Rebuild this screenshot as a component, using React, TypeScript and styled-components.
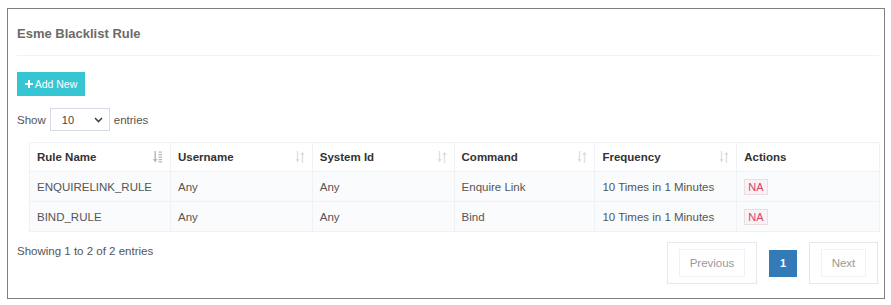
import React from "react"
import styled, { createGlobalStyle } from "styled-components"

const GlobalStyle = createGlobalStyle`
  html, body {
    margin: 0;
    padding: 0;
    background: #ffffff;
    font-family: "Liberation Sans", Arial, sans-serif;
  }
`

const Panel = styled.div`
  box-sizing: border-box;
  margin: 8px 0 0 7px;
  width: 878px;
  height: 291px;
  border: 1px solid #808080;
  padding: 0 5px 0 9px;
  display: flex;
  flex-direction: column;
`

const PanelHead = styled.div`
  height: 46px;
  display: flex;
  align-items: center;
  border-bottom: 1px solid #eef1f5;
`

const Title = styled.span`
  font-size: 13px;
  font-weight: bold;
  color: #6b6b6b;
  padding-top: 3px;
`

const AddButton = styled.button`
  margin-top: 16px;
  width: 68px;
  height: 24px;
  border: 0;
  padding: 0;
  background: #36c6d3;
  color: #ffffff;
  font-family: inherit;
  font-size: 10.5px;
  display: flex;
  align-items: center;
  justify-content: center;
  gap: 2px;
  cursor: pointer;
`

const LengthRow = styled.div`
  margin-top: 12px;
  display: flex;
  align-items: center;
  gap: 4px;
  font-size: 11.5px;
  color: #555;
`

const SelectBox = styled.div`
  box-sizing: border-box;
  width: 60px;
  height: 23px;
  border: 1px solid #d4dbe5;
  display: flex;
  align-items: center;
  justify-content: space-between;
  padding: 0 6px 0 11px;
  font-size: 11px;
  color: #444;
`

const Table = styled.table`
  margin: 11px 0 0 12px;
  width: 851px;
  border-collapse: collapse;
  font-size: 11.5px;
`

const Th = styled.th`
  box-sizing: border-box;
  height: 29px;
  padding: 0 7px;
  text-align: left;
  font-weight: bold;
  color: #333;
  border: 1px solid #eef1f5;
  background: #ffffff;
  width: ${(p: { $w: number }) => p.$w}px;
`

const HeadInner = styled.div`
  display: flex;
  align-items: center;
  justify-content: space-between;
`

const Td = styled.td`
  height: 29px;
  padding: 0 7px;
  color: #555;
  border: 1px solid #eef1f5;
  background: #fafbfc;
`

const Badge = styled.span`
  display: inline-block;
  padding: 1px 3px;
  font-size: 11px;
  color: #d5436a;
  background: #f9f2f4;
  border: 1px solid #ebdde1;
`

const Footer = styled.div`
  display: flex;
  justify-content: space-between;
  align-items: flex-start;
  margin-top: 10px;
  padding-right: 1px;
`

const Info = styled.span`
  font-size: 11.5px;
  color: #555;
  margin-top: 3px;
`

const Pager = styled.div`
  display: flex;
  align-items: center;
  gap: 12px;
`

const PageShell = styled.div`
  box-sizing: border-box;
  border: 1px solid #e4e8ee;
  padding: 6px 11px;
`

const PageLink = styled.span`
  box-sizing: border-box;
  display: flex;
  align-items: center;
  justify-content: center;
  height: 28px;
  width: ${(p: { $w: number }) => p.$w}px;
  border: 1px solid #eef1f5;
  font-size: 11.5px;
  color: #999;
`

const ActivePage = styled.span`
  display: flex;
  align-items: center;
  justify-content: center;
  width: 28px;
  height: 27px;
  background: #337ab7;
  color: #ffffff;
  font-size: 11px;
  font-weight: bold;
`

const SortIcon = ({ active }: { active?: boolean }) => (
  <svg width="10" height="12" viewBox="0 0 10 12">
    {active ? (
      <g fill="#b5b5b5">
        <rect x="1.5" y="0" width="1.4" height="9" />
        <path d="M0 8 L4.4 8 L2.2 11.5 Z" />
        <rect x="5.5" y="0.5" width="3.5" height="1.2" />
        <rect x="5.5" y="3" width="3.5" height="1.2" />
        <rect x="5.5" y="5.5" width="3.5" height="1.2" />
        <rect x="5.5" y="8" width="3.5" height="1.2" />
        <rect x="5.5" y="10.3" width="3.5" height="1.2" />
      </g>
    ) : (
      <g fill="#e0e0e0">
        <rect x="1.8" y="0" width="1.4" height="9" />
        <path d="M0.3 8 L4.7 8 L2.5 11.5 Z" />
        <rect x="6.8" y="3" width="1.4" height="9" />
        <path d="M5.3 4 L9.7 4 L7.5 0.5 Z" />
      </g>
    )}
  </svg>
)

const columns = [
  { name: "Rule Name", w: 141, sort: true, active: true },
  { name: "Username", w: 142, sort: true },
  { name: "System Id", w: 142, sort: true },
  { name: "Command", w: 141, sort: true },
  { name: "Frequency", w: 142, sort: true },
  { name: "Actions", w: 143, sort: false },
]

const rows = [
  ["ENQUIRELINK_RULE", "Any", "Any", "Enquire Link", "10 Times in 1 Minutes"],
  ["BIND_RULE", "Any", "Any", "Bind", "10 Times in 1 Minutes"],
]

export default function App() {
  return (
    <>
      <GlobalStyle />
      <Panel>
        <PanelHead>
          <Title>Esme Blacklist Rule</Title>
        </PanelHead>
        <div>
          <AddButton>
            <svg width="8" height="8" viewBox="0 0 8 8">
              <path d="M3 0h2v3h3v2H5v3H3V5H0V3h3z" fill="#fff" />
            </svg>
            Add New
          </AddButton>
        </div>
        <LengthRow>
          <span>Show</span>
          <SelectBox>
            <span>10</span>
            <svg width="9" height="6" viewBox="0 0 9 6">
              <path d="M1 1 L4.5 4.5 L8 1" stroke="#444" strokeWidth="1.6" fill="none" />
            </svg>
          </SelectBox>
          <span>entries</span>
        </LengthRow>
        <Table>
          <thead>
            <tr>
              {columns.map((c) => (
                <Th key={c.name} $w={c.w}>
                  <HeadInner>
                    <span>{c.name}</span>
                    {c.sort && <SortIcon active={c.active} />}
                  </HeadInner>
                </Th>
              ))}
            </tr>
          </thead>
          <tbody>
            {rows.map((r) => (
              <tr key={r[0]}>
                {r.map((cell, i) => (
                  <Td key={i}>{cell}</Td>
                ))}
                <Td>
                  <Badge>NA</Badge>
                </Td>
              </tr>
            ))}
          </tbody>
        </Table>
        <Footer>
          <Info>Showing 1 to 2 of 2 entries</Info>
          <Pager>
            <PageShell>
              <PageLink $w={66}>Previous</PageLink>
            </PageShell>
            <ActivePage>1</ActivePage>
            <PageShell>
              <PageLink $w={45}>Next</PageLink>
            </PageShell>
          </Pager>
        </Footer>
      </Panel>
    </>
  )
}
